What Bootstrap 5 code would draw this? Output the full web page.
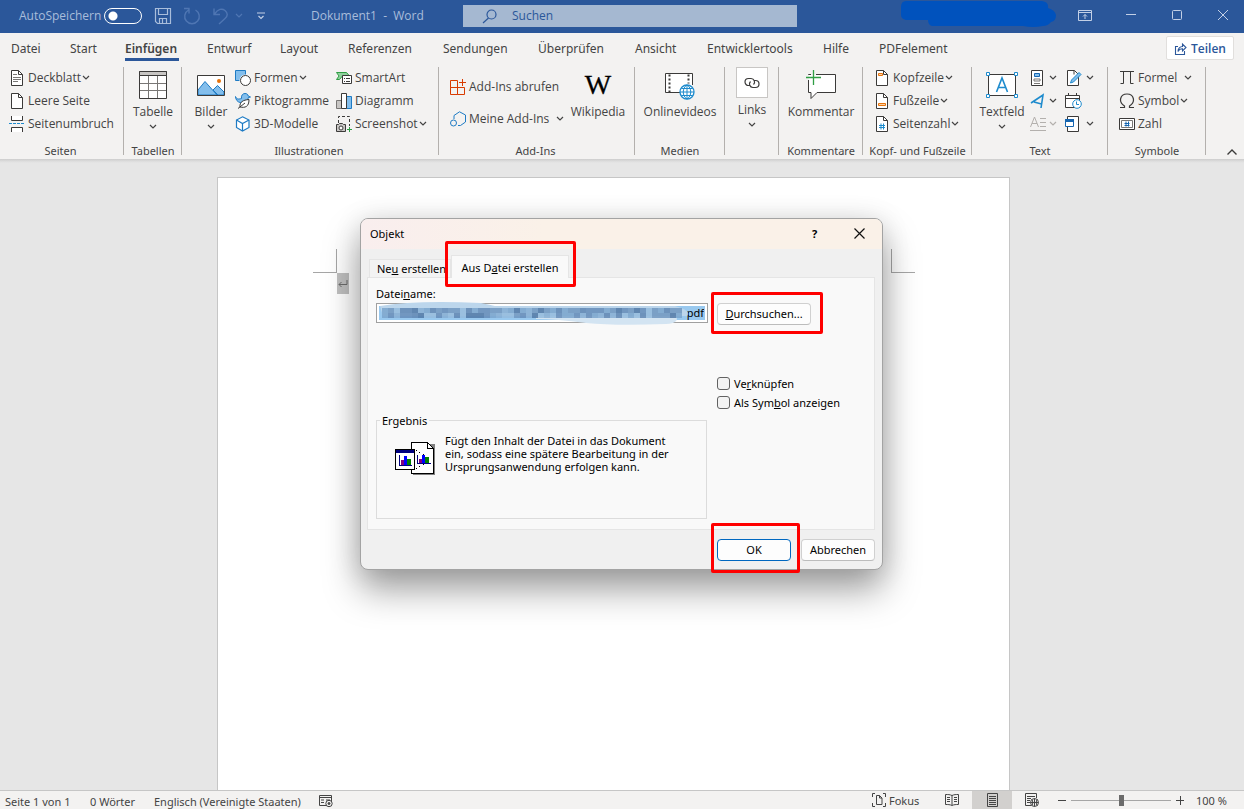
<!DOCTYPE html>
<html lang="de">
<head>
<meta charset="utf-8">
<meta name="viewport" content="width=device-width, initial-scale=1">
<title>Dokument1 - Word</title>
<link href="https://cdn.jsdelivr.net/npm/bootstrap@5.3.0/dist/css/bootstrap.min.css" rel="stylesheet">
<style>
  :root { --blue: #2b579a; --ink: #444; --chrome: #f3f2f1; }
  body { font-family: "Noto Sans", "Open Sans", sans-serif; font-size: 12px; line-height: 16px; color: var(--ink); background: #e6e6e6; }
  svg { display: block; flex: none; fill: none; }
  button { font: inherit; color: inherit; background: none; border: 0; padding: 0; }

  /* title bar */
  .titlebar { height: 33px; background: var(--blue); color: #a9bddb; font-family: "Open Sans", sans-serif; }
  .title-left { width: 463px; height: 31px; padding-left: 19px; }
  .autosave { width: 77px; white-space: nowrap; }
  .toggle { appearance: none; width: 38px; height: 16px; margin: 0 6px 0 8px; border: 1px solid #fff; border-radius: 8px; background: radial-gradient(circle at 8px 7px, #fff 4px, transparent 5px); }
  .quick { width: 29px; }
  .doc-title { margin-left: 46px; white-space: pre; }
  .finder { width: 334px; height: 22px; margin-top: 5px; background: #a5b8d1; color: var(--blue); padding-left: 19px; }
  .finder input { background: none; border: 0; padding: 0 0 2px; margin-left: 15px; outline: 0; width: 240px; color: var(--blue); height: 20px; }
  .finder input::placeholder { color: var(--blue); opacity: 1; }
  .win-btns { margin-right: -2px; }
  .win-btn { width: 46px; height: 30px; }

  /* ribbon */
  .tabs { height: 29px; background: var(--chrome); }
  .tab-grid { display: grid; grid-template-columns: 59px 55px 82px 73px 68px 95px 95px 97px 72px 116px 56px 80px; padding-left: 11px; }
  .tab-grid a { color: var(--ink); text-decoration: none; justify-self: start; height: 20px; margin-top: 8px; white-space: nowrap; }
  .tab-grid a.current { font-weight: 600; width: 54px; border-bottom: 3px solid var(--blue); }
  .share { width: 68px; height: 24px; margin: 3px 10px 0 0; background: #fff; border: 1px solid #e1dfdd; border-radius: 2px; color: var(--blue); font-weight: 600; gap: 4px; padding-top: 1px; font-family: "Open Sans", sans-serif; }
  .ribbon { display: grid; grid-template-columns: 124px 58px 257px 196px 90px 54px 84px 109px 136px 98px 1fr; height: 97px; background: var(--chrome); padding-top: 4px; font-family: "Open Sans", sans-serif; }
  .grp { position: relative; display: flex; flex-direction: column; height: 93px; }
  .grp::after { content: ""; position: absolute; right: 0; top: 1px; width: 1px; height: 88px; background: #b3b0ad; }
  .grp-body { display: flex; height: 77px; }
  .grp-name { font-family: "Noto Sans", sans-serif; font-size: 11px; text-align: center; white-space: nowrap; padding-top: 1px; margin-right: 3px; }
  .small-btn { display: flex; align-items: center; height: 23px; gap: 3px; white-space: nowrap; }
  .small-btn.loose { height: 32px; }
  .big-btn { display: flex; flex-direction: column; align-items: center; white-space: nowrap; }
  .big-ico { height: 38px; display: flex; align-items: center; justify-content: center; }
  .link-box { width: 32px; height: 31px; margin: 1px 0 4px; border: 1px solid #c8c6c4; background: #fff; display: flex; align-items: center; justify-content: center; }
  .chev { stroke: #444; stroke-width: 1.2; }
  .small-btn .chev { margin-left: -2px; }
  .small-btn .chev.far { margin-left: 4px; }
  .small-btn .chev.lone { margin-left: 0; }
  .big-btn .chev { margin-top: 4px; }
  .wiki { font: 28px/30px "Liberation Serif", serif; color: #000; -webkit-text-stroke: .3px #000; }
  .edge { height: 4px; background: linear-gradient(#cdcdcd, #dedede 60%, #e6e6e6); }

  /* document */
  .canvas { flex: 1 1 0; min-height: 0; padding: 14px 17px 0 0; overflow: hidden; }
  .sheet { width: 793px; margin: 0 auto; height: 100%; min-height: 640px; background: #fff; border: 1px solid #c6c6c6; padding: 71px 94px 71px 95px; }
  .crop { width: 24px; height: 24px; border-bottom: 1px solid #a6a6a6; }
  .crop.l { border-right: 1px solid #a6a6a6; } .crop.r { border-left: 1px solid #a6a6a6; }
  .para { width: 12px; height: 21px; margin-left: 24px; background: #c0c0c0; }

  /* status bar */
  .status { height: 19px; background: var(--chrome); border-top: 1px solid #c6c6c6; font-size: 11px; line-height: 21px; overflow: hidden; white-space: nowrap; }
  .status svg { stroke: #444; }
  .mode { width: 40px; height: 19px; display: flex; align-items: center; justify-content: center; }
  .mode.on { background: #d2d0ce; }
  .zoom { appearance: none; width: 100px; height: 12px; background: linear-gradient(#a6a6a6,#a6a6a6) center/100% 1px no-repeat; margin: 0 5px; }
  .zoom::-webkit-slider-thumb { appearance: none; width: 5px; height: 11px; background: #6b6b6b; }

  /* dialog */
  .dlg { position: absolute; top: 218px; left: calc(50% - 262px); width: 523px; background: #f0f0f0; border: 1px solid #a3a3a3; border-radius: 8px; color: #000; font-size: 11px; line-height: 13px; box-shadow: 0 20px 36px rgba(0,0,0,.36), 0 2px 28px rgba(0,0,0,.12); }
  .dlg-head { height: 30px; padding: 0 0 2px 9px; border-radius: 7px 7px 0 0; background: linear-gradient(90deg, #f9eeee, #faf1e8 35%); }
  .dlg-head button { width: 45px; height: 28px; display: flex; align-items: center; justify-content: center; }
  .dlg-body { padding: 6px 7px 8px 6px; }
  .dlg-tabs { height: 22px; padding-left: 2px; }
  .dlg-tab { height: 18px; width: 82px; padding-left: 7px; text-align: left; white-space: nowrap; background: #f3f3f3; border: 1px solid #e5e5e5; border-bottom: 0; align-self: end; }
  .dlg-tab.active { position: relative; width: 118px; height: 23px; margin-bottom: -1px; padding: 0; text-align: center; background: #f9f9f9; }
  .pane { background: #f9f9f9; border: 1px solid #e5e5e5; padding: 9px 8px 10px; height: 253px; display: grid; grid-template-columns: 332px 1fr; column-gap: 9px; grid-template-rows: 133px 1fr; }
  .mark-box { position: absolute; border: 3px solid #f00; border-radius: 2px; pointer-events: none; z-index: 3; }
  .mark-tab { inset: -15px -8px -9px -7px; } .mark-find { inset: -12px -13px -10px -7px; } .mark-ok { inset: -17px -10px -13px -7px; }
  .filebox { position: relative; margin-top: 3px; height: 20px; }
  .filebox input { display: block; width: 100%; height: 20px; border: 1px solid #a0a0a0; background: linear-gradient(#99c9ef,#99c9ef) 2px 2px/326px 14px no-repeat #fff; padding: 0 3px 2px; text-align: right; font-size: 11px; color: #000; outline: 0; }
  .smear { position: absolute; left: 0; top: -3px; }
  .dbtn { position: relative; height: 22px; background: #fdfdfd; border: 1px solid #d0d0d0; border-bottom-color: #bcbcbc; border-radius: 4px; width: 74px; padding-bottom: 1px; }
  .dbtn.find { width: 94px; margin-top: 16px; } .dbtn.prime { border-color: #0067c0; }
  .tick { display: flex; align-items: center; height: 19px; gap: 4px; }
  .tick.first { margin-top: 49px; }
  .tick input { appearance: none; width: 13px; height: 13px; border: 1px solid #626262; border-radius: 3px; background: #f3f3f3; margin: 0; }
  .result { border: 1px solid #dcdcdc; margin: 0; padding: 0; width: 331px; height: 99px; align-self: end; position: relative; }
  .result legend { position: absolute; top: -7px; left: 3px; width: auto; float: none; margin: 0; padding: 0 2px; background: #f9f9f9; font-size: 11px; line-height: 13px; }
  .result svg { margin: 21px 0 0 18px; }
  .result p { margin: 13px 0 0 8px; width: 240px; white-space: nowrap; }
  .dlg-foot { gap: 10px; margin-top: 9px; }
</style>
</head>
<body class="vh-100 d-flex flex-column overflow-hidden m-0">
<svg width="0" height="0" class="position-absolute"><symbol id="ch" viewBox="0 0 8 6"><path d="M1 1l3 3 3-3"/></symbol></svg>

<header class="titlebar d-flex align-items-start flex-shrink-0">
  <div class="title-left d-flex align-items-center flex-shrink-0">
    <label for="auto" class="autosave">AutoSpeichern</label>
    <input id="auto" type="checkbox" class="toggle">
    <button class="quick d-flex justify-content-center" aria-label="Speichern"><svg width="18" height="18" stroke="#a9bddb" stroke-width="1.2"><path d="M1.500 1.500h15v15h-13l-2-2zM4.500 1.500v6h9v-6M5.500 16.500v-5h7v5M8.500 12v4"/></svg></button>
    <button class="quick d-flex justify-content-center" aria-label="Wiederholen"><svg width="18" height="18" stroke="#4f76b3" stroke-width="1.4"><path d="M5.500 3A7.300 7.300 0 1 0 12.500 3M1 1.500h5v5"/></svg></button>
    <button class="quick d-flex justify-content-center" aria-label="Rückgängig"><svg width="18" height="18" stroke="#4f76b3" stroke-width="1.400"><path d="M2 1.500v6h6M2.500 7C6 2 10 1 13 3.500s3 5.500 0 8L7 17"/></svg></button>
    <svg class="chev" width="8" height="6" style="stroke:#4f76b3"><use href="#ch"/></svg>
    <button style="margin-left:14px" aria-label="Anpassen"><svg width="8" height="8" stroke="#c3d0e6" stroke-width="1.200"><path d="M0 1h8M1.500 4L4 6.500 6.500 4"/></svg></button>
    <span class="doc-title">Dokument1  -  Word</span>
  </div>
  <div class="finder d-flex align-items-center flex-shrink-0">
    <svg width="15" height="15" stroke="#2b579a" stroke-width="1.200"><circle cx="9.500" cy="5.500" r="4.500"/><path d="M6.500 9L1 14"/></svg>
    <input type="search" placeholder="Suchen" aria-label="Suchen">
  </div>
  <div class="win-btns ms-auto d-flex">
    <svg width="158" height="28" class="me-1"><path fill="#0052bd" d="M1 7Q1 1 6 1h136q7 1 6 7 7 2 8 7 0 6-5 7-3 4-8 4-10 2-20 0H32q-4-1-4-6H6Q1 19 1 15z"/></svg>
    <button class="win-btn d-flex align-items-center justify-content-center" aria-label="Menüband"><svg width="14" height="11" stroke="#c3d0e6"><path d="M.5.5h13v10H.5zM.5 2.500h13M7 9V4.500M5 6.500l2-2 2 2"/></svg></button>
    <button class="win-btn d-flex align-items-center justify-content-center" aria-label="Minimieren"><svg width="10" height="2" stroke="#c3d0e6"><path d="M0 .5h10"/></svg></button>
    <button class="win-btn d-flex align-items-center justify-content-center" aria-label="Maximieren"><svg width="10" height="10" stroke="#c3d0e6"><rect x=".5" y=".5" width="9" height="9" rx="1"/></svg></button>
    <button class="win-btn d-flex align-items-center justify-content-center" aria-label="Schließen"><svg width="10" height="10" stroke="#c3d0e6"><path d="M0 0l10 10M10 0L0 10"/></svg></button>
  </div>
</header>

<nav class="tabs d-flex justify-content-between flex-shrink-0">
  <div class="tab-grid">
    <a href="#">Datei</a><a href="#">Start</a><a href="#" class="current">Einfügen</a><a href="#">Entwurf</a><a href="#">Layout</a><a href="#">Referenzen</a><a href="#">Sendungen</a><a href="#">Überprüfen</a><a href="#">Ansicht</a><a href="#">Entwicklertools</a><a href="#">Hilfe</a><a href="#">PDFelement</a>
  </div>
  <button class="share d-flex align-items-center justify-content-center"><svg width="13" height="13" stroke="#2b579a" stroke-width="1.100"><path d="M4 4.500H1.500v8h9V9M4 9.500c0-3 2-5 4.500-5V2L12 5.500 8.500 9V6.800C6.500 6.800 5 7.500 4 9.500z"/></svg>Teilen</button>
</nav>

<section class="ribbon flex-shrink-0">
  <div class="grp">
    <div class="grp-body flex-column" style="padding-left:9px">
      <button class="small-btn"><svg width="16" height="16" stroke="#3b3a39"><path fill="#fff" d="M2.500.5h7l4 4v11h-11z"/><path d="M9.500.5v4h4"/><path stroke="#797775" d="M4 4.500h4M4 7.500h8M4 9.500h8M4 11.500h5"/></svg>Deckblatt<svg class="chev" width="8" height="6"><use href="#ch"/></svg></button>
      <button class="small-btn"><svg width="16" height="16" stroke="#3b3a39"><path fill="#fff" d="M2.500.5h7l4 4v11h-11z"/><path d="M9.500.5v4h4"/></svg>Leere Seite</button>
      <button class="small-btn"><svg width="16" height="16" stroke="#3b3a39"><path fill="#fff" d="M2.500 0v4.500h11V0M2.500 16v-4.500h11V16"/><path stroke="#1e8bcd" stroke-dasharray="3 1" d="M0 7.500h16"/></svg>Seitenumbruch</button>
    </div>
    <div class="grp-name">Seiten</div>
  </div>
  <div class="grp">
    <div class="grp-body justify-content-center">
      <button class="big-btn"><span class="big-ico"><svg width="28" height="28"><path fill="#fff" stroke="#3b3a39" d="M.5.5h27v27H.5z"/><path fill="#c8c6c4" stroke="#3b3a39" d="M.5.5h27v4H.5z"/><path stroke="#797775" d="M9.500 5v22M18.500 5v22M1 12.500h26M1 19.500h26"/></svg></span>Tabelle<svg class="chev" width="8" height="6"><use href="#ch"/></svg></button>
    </div>
    <div class="grp-name me-0">Tabellen</div>
  </div>
  <div class="grp">
    <div class="grp-body">
      <button class="big-btn" style="width:58px"><span class="big-ico"><svg width="28" height="21"><path fill="#fff" d="M.5.5h27v20H.5z"/><path fill="#83beec" stroke="#1e7bc4" d="M1 15l7-8.500L20 20H1zM16 15l4.500-4.500L27 17v3h-6z"/><circle cx="22" cy="6" r="2" fill="#e8740c"/><path stroke="#3b3a39" d="M.5.5h27v20H.5z"/></svg></span>Bilder<svg class="chev" width="8" height="6"><use href="#ch"/></svg></button>
      <div style="width:101px;margin-left:-5px">
        <button class="small-btn"><svg width="16" height="16"><path fill="#83beec" stroke="#1e7bc4" d="M.5.5h10v10H.5z"/><circle cx="10.500" cy="10.500" r="6" fill="#f3f2f1"/><circle cx="10.500" cy="10.500" r="5" fill="#fff" stroke="#3b3a39"/></svg>Formen<svg class="chev" width="8" height="6"><use href="#ch"/></svg></button>
        <button class="small-btn"><svg width="16" height="16"><path fill="#83beec" stroke="#1e7bc4" d="M.5 3.500C2 7 4 6 6.500 5.500 6 2 8 .5 10 .5s3 1 3.200 2.500L15.500 4l-2.300.7C13 8 9 10 5 9.500 2.500 9 .5 6.500.5 3.500z"/><path fill="#fff" stroke="#3b3a39" d="M14 6.500C8 7 4.500 9 5 14c5 1 9 0 9-7.500zM3 15.500l7-5.500"/></svg>Piktogramme</button>
        <button class="small-btn"><svg width="16" height="16" stroke="#1e7bc4" stroke-width="1.200"><path fill="#fff" d="M7.500.8L14 4v7.500L7.500 15 1.500 11.500V4z"/><path d="M1.500 4l6 3.500L14 4M7.500 7.500V15"/></svg>3D-Modelle</button>
      </div>
      <div>
        <button class="small-btn"><svg width="16" height="16"><path fill="#8fd19e" stroke="#2f9e44" d="M.5 2.500h10l3 3.500H6.500l-3 3.500H.5L3 6z"/><path fill="#fff" stroke="#3b3a39" d="M6.500 5.500h9v8h-9zM8 8.500h1M10 8.500h4M8 11.500h1M10 11.500h4"/></svg>SmartArt</button>
        <button class="small-btn"><svg width="16" height="16"><path fill="#c8c6c4" stroke="#797775" d="M.5 7.500h5v8h-5z"/><path fill="#83beec" stroke="#1e7bc4" d="M10.500 3.500h5v12h-5z"/><path fill="#fff" stroke="#3b3a39" d="M5.500.5h5v15h-5z"/></svg>Diagramm</button>
        <button class="small-btn"><svg width="16" height="16"><path stroke="#3b3a39" stroke-dasharray="3 2" d="M2.500 7V.5h11V10"/><path fill="#c8c6c4" stroke="#3b3a39" d="M.5 8.500h2l1-1h3l1 1h2v7h-9z"/><circle cx="5" cy="12" r="2" fill="#fff" stroke="#3b3a39"/><path stroke="#2f9e44" d="M13.500 11v5M11 13.500h5"/></svg>Screenshot<svg class="chev" width="8" height="6"><use href="#ch"/></svg></button>
      </div>
    </div>
    <div class="grp-name">Illustrationen</div>
  </div>
  <div class="grp">
    <div class="grp-body">
      <div style="padding:5px 0 0 11px;width:130px">
        <button class="small-btn loose"><svg width="16" height="16" stroke="#d83b01"><path d="M.5 1.500h7v7h-7zM.5 8.500h7v7h-7zM7.500 8.500h7v7h-7zM12.500 0v7M9 3.500h7"/></svg>Add-Ins abrufen</button>
        <button class="small-btn loose"><svg width="16" height="16" stroke="#1e7bc4"><path d="M4 8V4.500L9.500.8 15.500 4v7l-5 3.500H8"/><circle cx="3.500" cy="12" r="3"/></svg>Meine Add-Ins<svg class="chev far" width="8" height="6"><use href="#ch"/></svg></button>
      </div>
      <button class="big-btn" style="width:58px"><span class="big-ico wiki">W</span>Wikipedia</button>
    </div>
    <div class="grp-name">Add-Ins</div>
  </div>
  <div class="grp">
    <div class="grp-body justify-content-center">
      <button class="big-btn"><span class="big-ico"><svg width="30" height="30"><path fill="#fff" stroke="#3b3a39" d="M15 22.500H.5V3.500h27V15"/><path stroke="#3b3a39" stroke-width="2" stroke-dasharray="2 2" d="M4.500 4.500v18M23.500 4.500v9"/><circle cx="22" cy="22" r="7" fill="#fff" stroke="#1e8bcd" stroke-width="1.300"/><path stroke="#1e8bcd" d="M22 15v14M15 22h14M16.500 18.500h11M16.500 25.500h11M22 15c-5 3-5 11 0 14M22 15c5 3 5 11 0 14"/></svg></span>Onlinevideos</button>
    </div>
    <div class="grp-name me-0">Medien</div>
  </div>
  <div class="grp">
    <div class="grp-body justify-content-center">
      <button class="big-btn"><span class="link-box"><svg width="16" height="12" stroke="#3b3a39" stroke-width="1.200"><path d="M6 8.500H4.500a3.500 3.500 0 0 1 0-7H7a3.500 3.500 0 0 1 2.500 6M10 3.500h1.500a3.500 3.500 0 0 1 0 7H9a3.500 3.500 0 0 1-2.500-6"/></svg></span>Links<svg class="chev" width="8" height="6"><use href="#ch"/></svg></button>
    </div>
  </div>
  <div class="grp">
    <div class="grp-body justify-content-center">
      <button class="big-btn"><span class="big-ico"><svg width="30" height="30"><path fill="#fff" stroke="#3b3a39" d="M2.500 4.500h27v18H11l-6 6v-6H2.500z"/><path stroke="#f3f2f1" stroke-width="5" d="M0 7.500h3M7.500 2v3"/><path stroke="#2f9e44" stroke-width="1.300" d="M0 7.500h15M7.500 0v15"/></svg></span>Kommentar</button>
    </div>
    <div class="grp-name me-0">Kommentare</div>
  </div>
  <div class="grp">
    <div class="grp-body flex-column" style="padding-left:11px">
      <button class="small-btn"><svg width="16" height="16" stroke="#3b3a39"><path fill="#fff" d="M2.500.5h7l4 4v11h-11z"/><path d="M9.500.5v4h4"/><path fill="#fbd2a5" stroke="#e8740c" d="M4.500 3.500h4v2h-4z"/></svg>Kopfzeile<svg class="chev" width="8" height="6"><use href="#ch"/></svg></button>
      <button class="small-btn"><svg width="16" height="16" stroke="#3b3a39"><path fill="#fff" d="M2.500.5h7l4 4v11h-11z"/><path d="M9.500.5v4h4"/><path fill="#fbd2a5" stroke="#e8740c" d="M4.500 10.500h7v2h-7z"/></svg>Fußzeile<svg class="chev" width="8" height="6"><use href="#ch"/></svg></button>
      <button class="small-btn"><svg width="16" height="16" stroke="#3b3a39"><path fill="#fff" d="M2.500.5h7l4 4v11h-11z"/><path d="M9.500.5v4h4"/><path stroke="#1e8bcd" d="M7 7.500v6M9.500 7.500v6M5 9.500h6M5 11.500h6"/></svg>Seitenzahl<svg class="chev" width="8" height="6"><use href="#ch"/></svg></button>
    </div>
    <div class="grp-name me-0">Kopf- und Fußzeile</div>
  </div>
  <div class="grp">
    <div class="grp-body">
      <button class="big-btn" style="width:60px"><span class="big-ico"><svg width="32" height="26"><path fill="#fff" stroke="#3b3a39" d="M2.500 2.500h27v21h-27z"/><path stroke="#1e8bcd" stroke-width="1.600" d="M10.500 20L16 6l5.500 14M12.500 15.500h7"/><path fill="#fff" stroke="#1e8bcd" d="M.5.5h3v3h-3zM28.500.5h3v3h-3zM.5 22.500h3v3h-3zM28.500 22.500h3v3h-3z"/></svg></span>Textfeld<svg class="chev" width="8" height="6"><use href="#ch"/></svg></button>
      <div style="width:35px;margin-left:-2px">
        <button class="small-btn" aria-label="Schnellbausteine"><svg width="16" height="16"><path fill="#fff" stroke="#3b3a39" d="M1.500.5h11v15h-11z"/><path fill="#83beec" stroke="#1565b0" d="M4.500 3.500h5v3h-5z"/><path stroke="#797775" d="M4 9h6v2H4zM4 13.500h6"/></svg><svg class="chev lone" width="8" height="6"><use href="#ch"/></svg></button>
        <button class="small-btn" aria-label="WordArt"><svg width="16" height="16" stroke="#1e8bcd" stroke-width="1.600"><path d="M1 10L13 2l-2 13M4 9l7.500 2"/></svg><svg class="chev lone" width="8" height="6"><use href="#ch"/></svg></button>
        <button class="small-btn" aria-label="Initiale" disabled><svg width="16" height="16" stroke="#b3b0ad"><path d="M.5 11L4.500 1l4 10M2 7.500h5M10 2.500h6M10 6.500h6M10 10.500h6M0 14.500h16"/></svg><svg class="chev lone" width="8" height="6" style="stroke:#b3b0ad"><use href="#ch"/></svg></button>
      </div>
      <div>
        <button class="small-btn" aria-label="Signatur"><svg width="18" height="16"><path fill="#fff" stroke="#3b3a39" d="M2.500.5h7l4 4v11h-11z"/><path stroke="#3b3a39" d="M9 .5v4"/><path fill="#83beec" stroke="#1e8bcd" d="M5.500 13l1-3 7.500-7.500 2 2L8.500 12z"/></svg><svg class="chev lone" width="8" height="6"><use href="#ch"/></svg></button>
        <button class="small-btn" aria-label="Datum"><svg width="18" height="16"><path fill="#fff" stroke="#3b3a39" d="M.5 2.500h14v12H.5z"/><path stroke="#3b3a39" d="M.5 5.500h14M3.500 0v3M11.500 0v3"/><circle cx="12" cy="11" r="4.300" fill="#fff" stroke="#1e8bcd"/><path stroke="#1e8bcd" d="M11.500 8.500v3H14"/></svg></button>
        <button class="small-btn" aria-label="Objekt"><svg width="18" height="16"><path fill="#fff" stroke="#3b3a39" d="M2.500.5h11v15h-11z"/><path fill="#fff" stroke="#1565b0" d="M.5 3.500h8v7h-8z"/><path fill="#1565b0" d="M0 3h9v3H0z"/></svg><svg class="chev lone" width="8" height="6"><use href="#ch"/></svg></button>
      </div>
    </div>
    <div class="grp-name me-0">Text</div>
  </div>
  <div class="grp">
    <div class="grp-body flex-column" style="padding-left:11px">
      <button class="small-btn"><svg width="16" height="16" stroke="#3b3a39"><path d="M1 1.500h14M4.500 1.500v12h-3M11.500 1.500v12h3"/></svg>Formel<svg class="chev far" width="8" height="6"><use href="#ch"/></svg></button>
      <button class="small-btn"><svg width="16" height="16" stroke="#3b3a39" stroke-width="1.200"><path d="M1 14.500h4.500V13C-1 9 1 1 8 1s9 8 2.500 12v1.500H15"/></svg>Symbol<svg class="chev" width="8" height="6"><use href="#ch"/></svg></button>
      <button class="small-btn"><svg width="16" height="16" stroke="#3b3a39"><path fill="#fff" d="M.5 2.500h15v11H.5z"/><path stroke="#797775" d="M2.500 4.500h11v7h-11z"/><path stroke="#1565b0" d="M7 5.500v5M9.500 5.500v5M5.500 7.500h5M5.500 9.500h5"/></svg>Zahl</button>
    </div>
    <div class="grp-name me-0">Symbole</div>
  </div>
  <div class="d-flex justify-content-end align-items-end pb-1" style="padding-right:7px"><button aria-label="Menüband reduzieren"><svg width="10" height="6" stroke="#3b3a39" stroke-width="1.400"><path d="M.5 5.500L5 1l4.500 4.500"/></svg></button></div>
</section>
<div class="edge flex-shrink-0"></div>

<main class="canvas">
  <div class="sheet">
    <div class="d-flex justify-content-between"><span class="crop l"></span><span class="crop r"></span></div>
    <div class="para d-flex align-items-center justify-content-center"><svg width="10" height="8" stroke="#6b6b6b"><path d="M9 0v4.500H1M3.500 2L1 4.500 3.500 7"/></svg></div>
  </div>
</main>

<footer class="status d-flex flex-shrink-0">
  <span style="width:85px;margin-left:5px">Seite 1 von 1</span><span style="width:64px">0 Wörter</span><span style="width:165px">Englisch (Vereinigte Staaten)</span>
  <svg width="15" height="14" style="margin-top:3px"><path d="M.5 1.500h12v10H.5zM.5 3.500h12M2 6h3M2 8.500h3M7 6h4"/><circle cx="10" cy="9.500" r="3.200" fill="#f3f2f1"/><circle cx="10" cy="9.500" r="1" fill="#444"/></svg>
  <div class="ms-auto d-flex align-items-center">
    <button class="d-flex align-items-center" style="gap:3px;width:60px"><svg width="14" height="14"><path d="M.5 4V.5H3M11 .5h2.500V4M.5 10v3.500H3M11 13.500h2.500V10M4.500 2.500h3l2.500 2.500v6.500H4.500zM7.500 2.500V5H10"/></svg>Fokus</button>
    <button class="mode" aria-label="Lesemodus"><svg width="14" height="12"><path d="M7 1.500C5 .5 3 .5.5.5v10c2.500 0 4.500 0 6.500 1 2-1 4-1 6.500-1V.5C11 .5 9 .5 7 1.500zM7 1v10M2 3.500h3M2 5.500h3M2 7.500h3M9 3.500h3M9 5.500h3M9 7.500h3"/></svg></button>
    <button class="mode on" aria-label="Seitenlayout"><svg width="11" height="14"><path d="M.5.500h10v13H.5zM2 3.500h7M2 5.500h7M2 7.500h7M2 9.500h7M2 11.500h7"/></svg></button>
    <button class="mode" aria-label="Weblayout"><svg width="14" height="14"><path d="M6 12.500H.5v-12h11V5M2 3.500h8M2 5.500h4M2 7.500h3M2 9.500h3"/><circle cx="9.500" cy="9.500" r="4" fill="#f3f2f1"/><path d="M5.500 9.500h8M9.500 5.500v8M7 6.500c1 2 1 4 0 6M12 6.500c-1 2-1 4 0 6"/></svg></button>
    <button class="ms-1" aria-label="Verkleinern" style="width:10px"><svg width="8" height="9" class="ms-auto"><path d="M0 4.500h8"/></svg></button>
    <input class="zoom" type="range" min="0" max="100" value="50" aria-label="Zoom">
    <button aria-label="Vergrößern" style="width:20px"><svg width="8" height="9"><path d="M0 4.500h8M4.500 0v9"/></svg></button>
    <span style="width:48px">100 %</span>
  </div>
</footer>

<div class="dlg" role="dialog" aria-labelledby="dt">
  <div class="dlg-head d-flex align-items-center">
    <span id="dt" class="me-auto">Objekt</span>
    <button class="fw-bold" aria-label="Hilfe">?</button>
    <button aria-label="Schließen"><svg width="11" height="11" stroke="#111" stroke-width="1.200"><path d="M.5.5l10 10M10.500.5l-10 10"/></svg></button>
  </div>
  <div class="dlg-body">
    <div class="dlg-tabs d-flex">
      <button class="dlg-tab">Ne<u>u</u> erstellen</button>
      <button class="dlg-tab active">Aus D<u>a</u>tei erstellen<span class="mark-box mark-tab"></span></button>
    </div>
    <div class="pane">
      <div>
        <label for="fn" class="d-block">Datei<u>n</u>ame:</label>
        <div class="filebox">
          <input id="fn" type="text" value="pdf">
          <svg class="smear" width="332" height="28">
            <path fill="#bcd6ec" d="M4 6Q40 0 105 3q10 2 14 3h180q16 4 12 10H20Q4 18 6 13z"/>
            <path fill="#d3e4f2" d="M160 16h140q4 7-10 8-50 2-80-1-30-4-50-4z"/>
            <g id="px"></g>
          </svg>
        </div>
      </div>
      <div>
        <button class="dbtn find"><u>D</u>urchsuchen...<span class="mark-box mark-find"></span></button>
        <label class="tick first"><input type="checkbox"><span>Ve<u>r</u>knüpfen</span></label>
        <label class="tick"><input type="checkbox"><span>Als Sym<u>b</u>ol anzeigen</span></label>
      </div>
      <fieldset class="result d-flex">
        <legend>Ergebnis</legend>
        <svg width="42" height="34" shape-rendering="crispEdges"><path fill="#808080" d="M18 2h22v31H18z"/><path fill="#fff" stroke="#000" d="M16.500.5h16l6 6v25h-22z"/><path stroke="#000" d="M32.500.5v6h6"/><path fill="#fff" stroke="#000" d="M.5 7.500h19v20H.5z"/><path fill="#000080" d="M1 8h18v3H1z"/><path stroke="#000080" d="M4.500 13v10.500H17M22.500 13v8.500H36"/><path fill="#800080" d="M6 18h3v5H6zM24 17h3v4h-3z"/><path fill="#00f" d="M9 14h3v9H9zM27 13h3v8h-3z"/><path fill="#008000" d="M12 17h4v6h-4zM30 15h4v6h-4z"/><path stroke="#000" stroke-dasharray="1 3" d="M21 8l8 5M21 27l8-5"/></svg>
        <p>Fügt den Inhalt der Datei in das Dokument<br>ein, sodass eine spätere Bearbeitung in der<br>Ursprungsanwendung erfolgen kann.</p>
      </fieldset>
    </div>
    <div class="dlg-foot d-flex justify-content-end">
      <button class="dbtn prime">OK<span class="mark-box mark-ok"></span></button>
      <button class="dbtn">Abbrechen</button>
    </div>
  </div>
</div>

<script src="https://cdn.jsdelivr.net/npm/bootstrap@5.3.0/dist/js/bootstrap.bundle.min.js"></script>
<script>
  // Mosaic over the hidden part of the file name
  const tones = ['#5f86b3','#86aed3','#5078a6','#7096bf','#94bbdd','#658cb8','#7aa4cd'];
  let out = '', seed = 7;
  for (let i = 0; i < 50; i++) for (let j = 0; j < 2; j++) {
    seed = (seed * 1103515245 + 12345) % 2147483648;
    out += `<rect x="${6 + i * 6}" y="${8 + j * 5}" width="6" height="5" fill="${tones[Math.floor(seed / 65536) % 7]}" fill-opacity=".85"/>`;
  }
  document.getElementById('px').innerHTML = out;
</script>
</body>
</html>
